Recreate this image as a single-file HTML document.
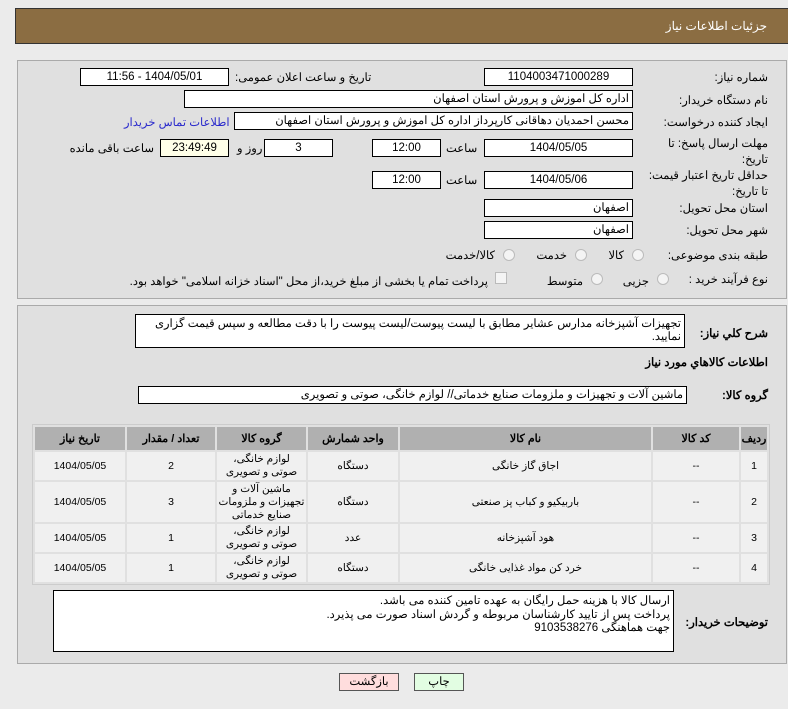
<!DOCTYPE html>
<html><head><meta charset="utf-8">
<style>
*{box-sizing:border-box}
body{margin:0;width:788px;height:709px;background:#ebebeb;font-family:"Liberation Sans","Noto Sans CJK SC",sans-serif;font-size:11px;color:#000;position:relative;overflow:hidden}
.a{position:absolute}
.hdr{left:15px;top:8px;width:780px;height:36px;background:#8b6d42;border:1px solid #333}
.hdr span{position:absolute;right:27px;top:10px;color:#fff;font-size:12px}
.pnl{border:1px solid #aaa;background:#e0e0e0}
.in{position:absolute;background:#fff;border:1px solid #000;height:18px;line-height:16px;padding:0 3px;direction:rtl;text-align:right;font-size:11.5px;white-space:nowrap;overflow:hidden}
.c{text-align:center}
.l{position:absolute;direction:rtl;text-align:right;white-space:nowrap;font-size:11.5px}
.rad{position:absolute;width:12px;height:12px;border-radius:50%;border:1px solid #bbb;background:#f4f4f4}
table{border-collapse:separate;border-spacing:2px;background:#e0e0e0;border:1px solid #ccc;direction:rtl;table-layout:fixed}
th{background:#b0b0b0;font-size:11px;font-weight:bold;height:23px;padding:0;overflow:hidden;white-space:nowrap}
td{background:#f0f0f0;text-align:center;font-size:10.5px;line-height:13px;padding:0;overflow:hidden}
</style></head><body>
<div class="a hdr"><span>جزئیات اطلاعات نیاز</span></div>

<div class="a pnl" style="left:17px;top:60px;width:770px;height:239px"></div>
<div class="a pnl" style="left:17px;top:305px;width:770px;height:359px"></div>

<div class="l" style="right:20px;top:70px">شماره نیاز:</div>
<div class="in c" style="left:484px;top:68px;width:149px">1104003471000289</div>
<div class="l" style="left:235px;top:70px">تاریخ و ساعت اعلان عمومی:</div>
<div class="in c" style="left:80px;top:68px;width:149px">1404/05/01 - 11:56</div>

<div class="l" style="right:20px;top:93px">نام دستگاه خریدار:</div>
<div class="in" style="left:184px;top:90px;width:449px">اداره کل اموزش و پرورش استان اصفهان</div>

<div class="l" style="right:20px;top:115px">ایجاد کننده درخواست:</div>
<div class="in" style="left:234px;top:112px;width:399px">محسن احمدیان دهاقانی کارپرداز اداره کل اموزش و پرورش استان اصفهان</div>
<div class="l" style="left:124px;top:115px;color:#2a2acc">اطلاعات تماس خریدار</div>

<div class="l" style="right:20px;top:136px;line-height:16px">مهلت ارسال پاسخ: تا<br>تاریخ:</div>
<div class="in c" style="left:484px;top:139px;width:149px">1404/05/05</div>
<div class="l" style="left:446px;top:141px">ساعت</div>
<div class="in c" style="left:372px;top:139px;width:69px">12:00</div>
<div class="in c" style="left:264px;top:139px;width:69px">3</div>
<div class="l" style="left:237px;top:141px">روز و</div>
<div class="in c" style="left:160px;top:139px;width:69px;background:#ffffe8">23:49:49</div>
<div class="l" style="right:634px;top:141px">ساعت باقی مانده</div>

<div class="l" style="right:20px;top:168px;line-height:16px">حداقل تاریخ اعتبار قیمت:<br>تا تاریخ:</div>
<div class="in c" style="left:484px;top:171px;width:149px">1404/05/06</div>
<div class="l" style="left:446px;top:173px">ساعت</div>
<div class="in c" style="left:372px;top:171px;width:69px">12:00</div>

<div class="l" style="right:20px;top:201px">استان محل تحویل:</div>
<div class="in" style="left:484px;top:199px;width:149px">اصفهان</div>
<div class="l" style="right:20px;top:223px">شهر محل تحویل:</div>
<div class="in" style="left:484px;top:221px;width:149px">اصفهان</div>

<div class="l" style="right:20px;top:248px">طبقه بندی موضوعی:</div>
<div class="rad" style="left:632px;top:249px"></div><div class="l" style="right:164px;top:248px">کالا</div>
<div class="rad" style="left:575px;top:249px"></div><div class="l" style="right:221px;top:248px">خدمت</div>
<div class="rad" style="left:503px;top:249px"></div><div class="l" style="right:293px;top:248px">کالا/خدمت</div>

<div class="l" style="right:20px;top:272px">نوع فرآیند خرید :</div>
<div class="rad" style="left:657px;top:273px"></div><div class="l" style="right:139px;top:274px">جزیی</div>
<div class="rad" style="left:591px;top:273px"></div><div class="l" style="right:205px;top:274px">متوسط</div>
<div class="a" style="left:495px;top:272px;width:12px;height:12px;border:1px solid #bbb;background:#f4f4f4"></div>
<div class="l" style="right:300px;top:274px">پرداخت تمام یا بخشی از مبلغ خرید،از محل "اسناد خزانه اسلامی" خواهد بود.</div>

<div class="l" style="right:20px;top:326px;font-weight:bold">شرح کلي نياز:</div>
<div class="in" style="left:135px;top:314px;width:550px;height:34px;white-space:normal;line-height:13px;padding-top:3px">تجهیزات آشپزخانه مدارس عشایر مطابق با لیست پیوست/لیست پیوست را با دقت مطالعه و سپس  قیمت گزاری نمایید.</div>
<div class="l" style="right:20px;top:355px;font-weight:bold">اطلاعات کالاهاي مورد نياز</div>
<div class="l" style="right:20px;top:388px;font-weight:bold">گروه کالا:</div>
<div class="in" style="left:138px;top:386px;width:549px">ماشین آلات و تجهیزات و ملزومات صنایع خدماتی// لوازم خانگی، صوتی و تصویری</div>

<table class="a" style="left:32px;top:424px;width:738px">
<tr><th style="width:26px">ردیف</th><th style="width:86px">کد کالا</th><th style="width:251px">نام کالا</th><th style="width:90px">واحد شمارش</th><th style="width:89px">گروه کالا</th><th style="width:88px">تعداد / مقدار</th><th>تاریخ نیاز</th></tr>
<tr style="height:28px"><td>1</td><td>--</td><td>اجاق گاز خانگی</td><td>دستگاه</td><td>لوازم خانگی،<br>صوتی و تصویری</td><td>2</td><td>1404/05/05</td></tr>
<tr style="height:40px"><td>2</td><td>--</td><td>باربیکیو و کباب پز صنعتی</td><td>دستگاه</td><td>ماشین آلات و<br>تجهیزات و ملزومات<br>صنایع خدماتی</td><td>3</td><td>1404/05/05</td></tr>
<tr style="height:28px"><td>3</td><td>--</td><td>هود آشپزخانه</td><td>عدد</td><td>لوازم خانگی،<br>صوتی و تصویری</td><td>1</td><td>1404/05/05</td></tr>
<tr style="height:28px"><td>4</td><td>--</td><td>خرد کن مواد غذایی خانگی</td><td>دستگاه</td><td>لوازم خانگی،<br>صوتی و تصویری</td><td>1</td><td>1404/05/05</td></tr>
</table>

<div class="l" style="right:20px;top:615px;font-weight:bold">توضیحات خریدار:</div>
<div class="in" style="left:53px;top:590px;width:621px;height:62px;white-space:normal;line-height:13.5px;padding-top:4px">ارسال کالا با هزینه حمل رایگان به عهده تامین کننده می باشد.<br>پرداخت پس از تایید کارشناسان مربوطه و گردش اسناد صورت می پذیرد.<br>جهت هماهنگی 9103538276</div>

<div class="in c" style="left:339px;top:673px;width:60px;height:18px;background:#fdd;border-color:#555">بازگشت</div>
<div class="in c" style="left:414px;top:673px;width:50px;height:18px;background:#e2fde2;border-color:#555">چاپ</div>
</body></html>
